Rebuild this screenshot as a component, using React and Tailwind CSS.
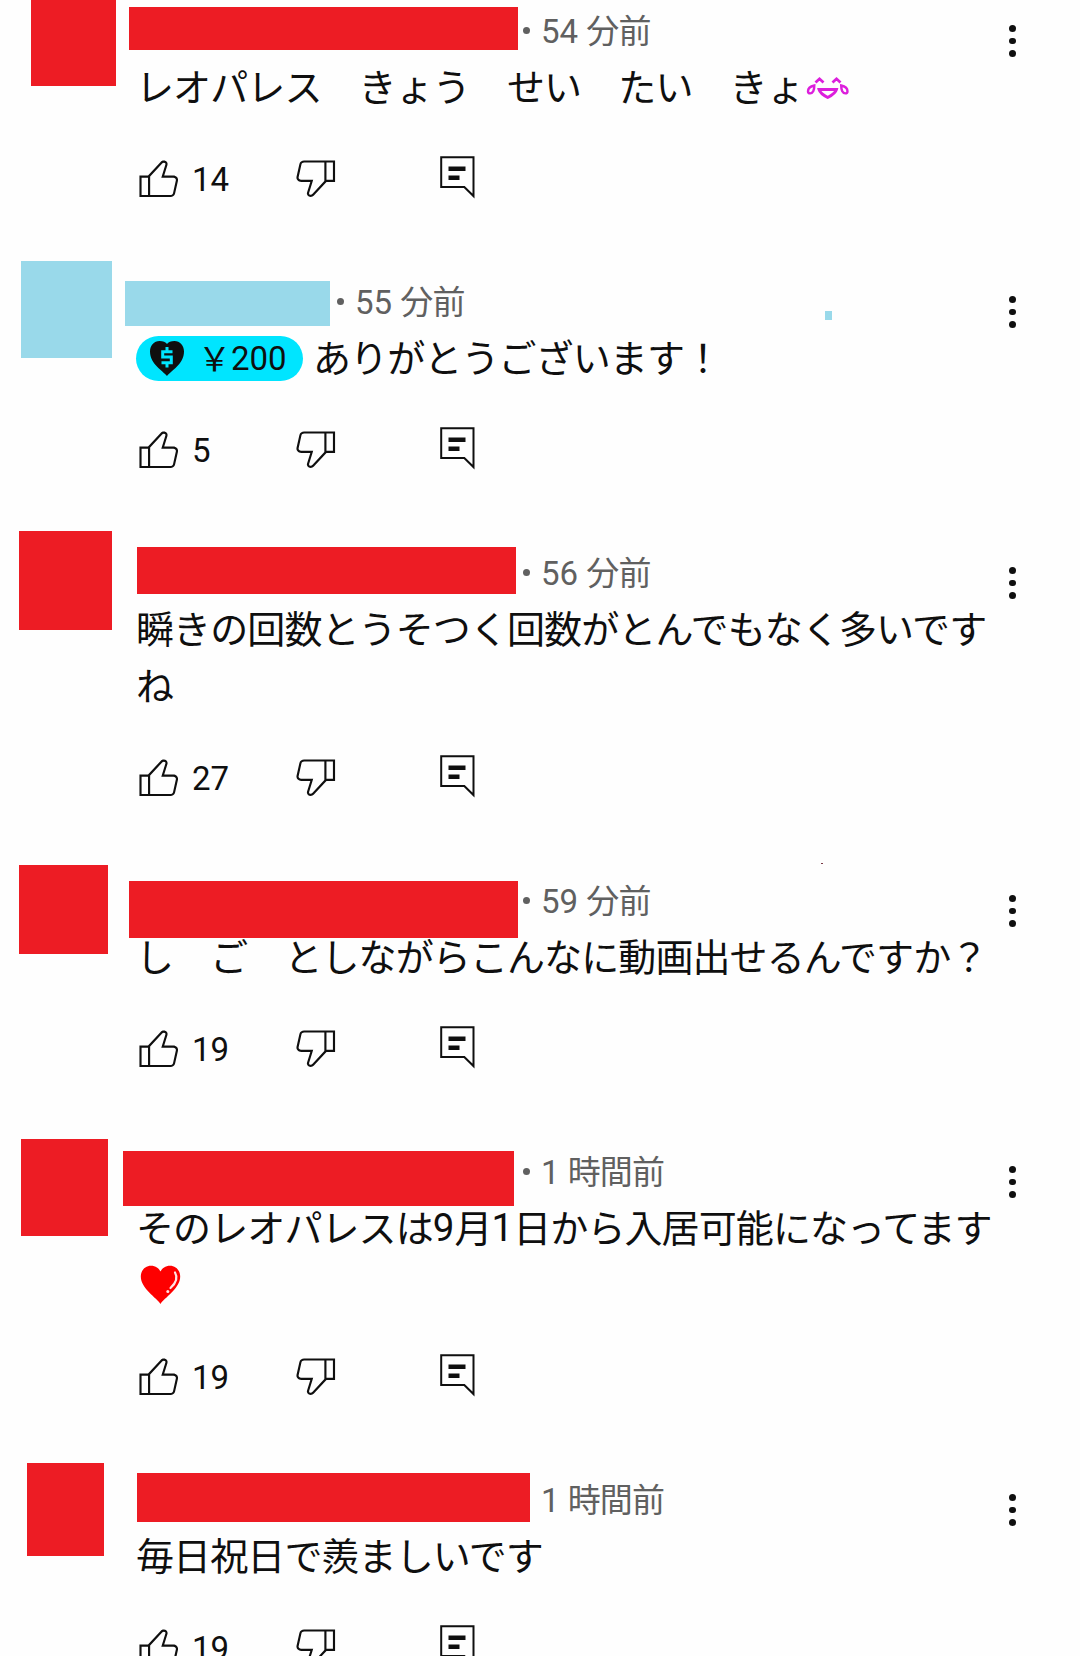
const comments = [
  {
    id: 1,
    height: 'h-[271px]',
    avatar: 'ml-[31px] mt-4 w-[85px] h-[86px] bg-[#ed1c24]',
    name: '-ml-2 mt-[23px] w-[389px] h-[43px] bg-[#ed1c24]',
    bullet: 'ml-[5px]',
    time: ['54', '分前'],
    lines: [<>レオパレス　きょう　せい　たい　きょ<JoyFace /></>],
    likes: 14,
  },
  {
    id: 2,
    height: 'h-[271px]',
    avatar: 'ml-[21px] mt-[6px] w-[91px] h-[97px] bg-[#99d9ea]',
    name: '-ml-3 mt-[26px] w-[205px] h-[45px] bg-[#99d9ea]',
    bullet: 'ml-[7px]',
    time: ['55', '分前'],
    lines: [<><ThanksBadge amount="200" />ありがとうございます！</>],
    likes: 5,
    mark: 'left-[825px] top-[56px] w-[7px] h-[9px] bg-[#99d9ea]',
  },
  {
    id: 3,
    height: 'h-[328px]',
    avatar: 'ml-[19px] mt-[5px] w-[93px] h-[99px] bg-[#ed1c24]',
    name: 'mt-[21px] w-[379px] h-[47px] bg-[#ed1c24]',
    bullet: 'ml-[7px]',
    time: ['56', '分前'],
    lines: ['瞬きの回数とうそつく回数がとんでもなく多いです', 'ね'],
    likes: 27,
  },
  {
    id: 4,
    height: 'h-[271px]',
    avatar: 'ml-[19px] mt-[11px] w-[89px] h-[89px] bg-[#ed1c24]',
    name: '-ml-2 mt-[27px] w-[389px] h-[57px] bg-[#ed1c24]',
    bullet: 'ml-[5px]',
    time: ['59', '分前'],
    lines: ['し　ご　としながらこんなに動画出せるんですか？'],
    likes: 19,
    mark: 'left-[821px] top-[9px] w-[2px] h-px bg-[#7a3a45]',
  },
  {
    id: 5,
    height: 'h-[328px]',
    avatar: 'ml-[21px] mt-[14px] w-[87px] h-[97px] bg-[#ed1c24]',
    name: '-ml-[14px] mt-[26px] w-[391px] h-[55px] bg-[#ed1c24]',
    bullet: 'ml-[9px]',
    time: ['1', '時間前'],
    lines: [
      <>そのレオパレスは<Digit>9</Digit>月<Digit>1</Digit>日から入居可能になってます</>,
      <RedHeart />,
    ],
    likes: 19,
  },
  {
    id: 6,
    height: 'h-[271px]',
    avatar: 'ml-[27px] mt-[10px] w-[77px] h-[93px] bg-[#ed1c24]',
    name: 'mt-5 w-[393px] h-[49px] bg-[#ed1c24]',
    bullet: null,
    time: ['1', '時間前'],
    lines: ['毎日祝日で羨ましいです'],
    likes: 19,
  },
]

function Digit({ children }) {
  return <span className="mt-1 font-['Roboto'] text-[38.5px] tracking-normal">{children}</span>
}

function JoyFace() {
  return (
    <svg className="ml-0.5 mt-1.5" width="43" height="24" viewBox="0 0 43 24" fill="none" stroke="#dc1fdc" strokeWidth="2.8">
      <path d="M9.5 6.5 13.5 2.8l4 3.7M26.5 6.5l4-3.7 4 3.7" />
      <path d="M13 13.5h17.5c-1 3.5-5 6-8.8 8-3.8-2-7.7-4.5-8.7-8z" />
      <path d="M8.3 9.5C4.5 10.3 2 12.5 2 15.2c0 1.4 1 2.2 2.2 2.2 2.6 0 4.2-3 4.1-7.9z" strokeWidth="2.4" />
      <path d="M35.2 9.5c3.8.8 6.3 3 6.3 5.700 0 1.400-1 2.200-2.200 2.200-2.600 0-4.200-3-4.100-7.900z" strokeWidth="2.4" />
    </svg>
  )
}

function RedHeart() {
  return (
    <svg className="ml-1 mt-1" width="41" height="40" viewBox="0 0 41 40">
      <path d="M20.500 39C17 33 .8 23.500.8 11.500.8 5 5.500.7 11 .7c4.500 0 8 2.600 9.500 5.800C22 3.300 25.500.7 30 .7c5.500 0 10.200 4.300 10.200 10.800C40.200 23.500 24 33 20.500 39z" fill="#fe0000" />
      <path d="M35 7.500c3 5 1 10.500-4.500 15.500" fill="none" stroke="#ffe3e3" strokeWidth="2.2" strokeLinecap="round" />
      <circle cx="27.8" cy="26.5" r="1.5" fill="#ffe3e3" />
    </svg>
  )
}

function ThanksBadge({ amount }) {
  return (
    <span className="mr-[10px] mt-1.5 flex h-[45px] w-[167px] items-center rounded-full bg-[#00e5ff] pl-[14px] tracking-normal">
      <svg width="34" height="35" viewBox="0 0 34 35">
        <path d="M17 35C13 30 0 23 0 10.500 0 4.500 4.200 0 9.500 0 13 0 15.800 1 17 3 18.200 1 21 0 24.500 0 29.800 0 34 4.500 34 10.500 34 23 21 30 17 35z" fill="#0f0f0f" />
        <path d="M17 6v3.500M17 23v3.500M22.500 10.800H12.700v5.200h8.600v5.700h-9.800" fill="none" stroke="#00e5ff" strokeWidth="3" />
      </svg>
      <span className="-mt-0.5 ml-[14px] text-[33px]">￥</span>
      <span className="mt-px font-['Roboto'] text-[33px]">{amount}</span>
    </span>
  )
}

function ThumbIcon({ className }) {
  return (
    <svg className={className} width="51.5" height="51.5" viewBox="0 0 24 24" fill="currentColor">
      <path d="M18.770 11h-4.230l1.520-4.940C16.380 5.030 15.540 4 14.380 4c-.58 0-1.140.24-1.520.65L7 11H3v10h14.430c1.060 0 1.980-.67 2.190-1.610l1.340-6C21.230 12.150 20.180 11 18.770 11zM7 20H4v-8h3v8zm12.980-6.830-1.340 6c-.1.480-.61.830-1.210.83H8v-8.610l5.600-6.060c.19-.21.480-.33.780-.33.260 0 .5.110.63.3.07.1.15.26.09.47l-1.520 4.940L13.180 12h5.580c.41 0 .8.170 1.030.46.130.15.260.4.190.71z" />
    </svg>
  )
}

function ReplyIcon() {
  return (
    <svg className="ml-[98px] mt-1 shrink-0" width="35" height="43" viewBox="0 0 35 43">
      <path d="M1.200 1.200h32.300V40L24.300 31H1.200z" fill="none" stroke="currentColor" strokeWidth="2" />
      <path d="M8.500 10.500h17v4.500h-17zM8.500 19.500h11V24h-11z" fill="currentColor" />
    </svg>
  )
}

function Comment({ comment }) {
  const [amount, unit] = comment.time

  return (
    <article className={`relative flex shrink-0 ${comment.height}`}>
      <div className="w-[137px] shrink-0">
        <div className={comment.avatar}></div>
      </div>

      <div className="w-[872px] shrink-0">
        <div className="flex h-[74px] items-start">
          <div className={`shrink-0 ${comment.name}`}></div>
          {comment.bullet && (
            <div className={`mt-[43px] size-[7px] shrink-0 rounded-full bg-[#606060] ${comment.bullet}`}></div>
          )}
          <p className="ml-[11px] mt-6 flex h-12 items-center whitespace-pre text-[#606060]">
            <span className="font-['Roboto'] text-[33px]">{amount} </span>
            <span className="-mt-1 text-[33px] tracking-[-0.9px]">{unit}</span>
          </p>
        </div>

        {comment.lines.map((line, idx) => (
          <p key={idx} className="-ml-px flex h-[57px] items-center whitespace-pre pb-1 text-[38px] tracking-[-0.9px]">
            {line}
          </p>
        ))}

        <div className="flex items-start pt-[37px]">
          <ThumbIcon className="-ml-[4.5px] shrink-0" />
          <span className="ml-2 mt-1 w-[98px] font-['Roboto'] text-[33px] leading-[48px]">{comment.likes}</span>
          <ThumbIcon className="mt-0.5 shrink-0 rotate-180" />
          <ReplyIcon />
        </div>
      </div>

      <div className="mt-[41px] flex flex-col gap-[6px]">
        <span className="size-[6.7px] rounded-full bg-[#0f0f0f]"></span>
        <span className="size-[6.7px] rounded-full bg-[#0f0f0f]"></span>
        <span className="size-[6.7px] rounded-full bg-[#0f0f0f]"></span>
      </div>

      {comment.mark && <div className={`absolute ${comment.mark}`}></div>}
    </article>
  )
}

export default function App() {
  return (
    <main className="h-[1656px] w-[1080px] overflow-hidden bg-[#fefefe] font-['Noto_Sans_CJK_JP',sans-serif] text-[#0f0f0f]">
      <div className="-mt-4 flex flex-col">
        {comments.map((comment) => (
          <Comment key={comment.id} comment={comment} />
        ))}
      </div>
    </main>
  )
}
